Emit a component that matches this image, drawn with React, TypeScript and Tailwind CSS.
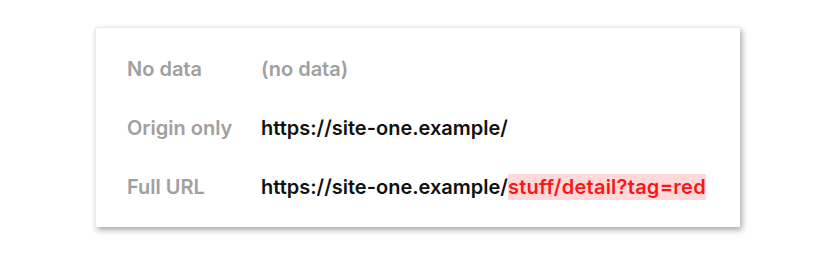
export default function App() {
  return (
    <div className="w-[835px] h-[266px] bg-white pt-[27px] pl-[95px]" style={{ fontFamily: 'Inter, "Liberation Sans", sans-serif' }}>
      <div className="w-[645px] h-[200px] bg-white border-l border-t border-[#ececec] shadow-[2px_3px_6px_rgba(0,0,0,0.35)] pl-[31px] pt-[28px]">
        <div className="grid grid-cols-[134px_1fr] gap-y-[33px] text-[20px] leading-[26px] font-semibold">
          <div className="text-[#a0a0a0]">No data</div>
          <div className="text-[#a0a0a0]">(no data)</div>
          <div className="text-[#a0a0a0]">Origin only</div>
          <div className="text-[#111]">https://site-one.example/</div>
          <div className="text-[#a0a0a0]">Full URL</div>
          <div className="text-[#111]">
            https://site-one.example/<span className="bg-[#ffd9d9] text-[#ff1414] py-[1px] tracking-[0.25px]">stuff/detail?tag=red</span>
          </div>
        </div>
      </div>
    </div>
  );
}
